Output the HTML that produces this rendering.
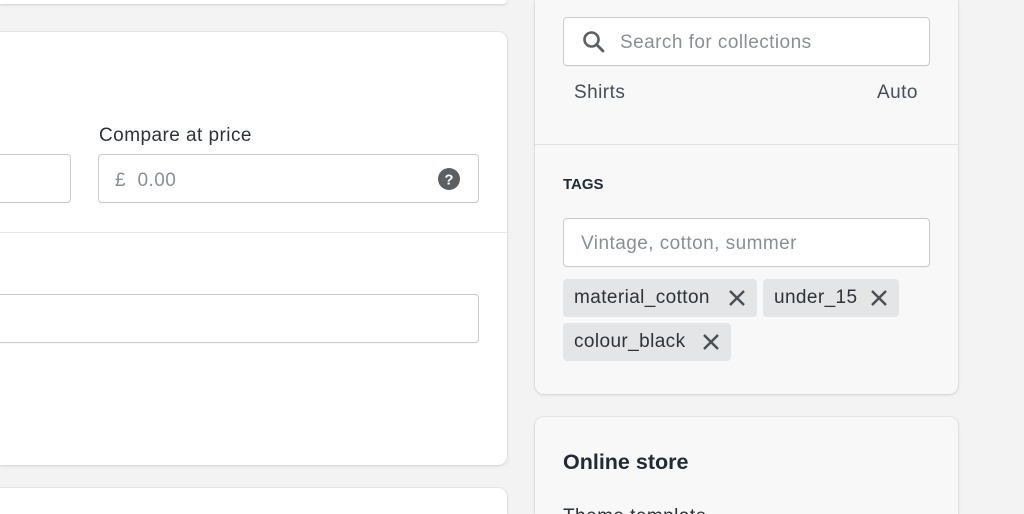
<!DOCTYPE html>
<html style="overflow:hidden;height:514px"><head><style>
body{margin:0;width:1024px;height:514px;background:#f3f3f3;position:relative;overflow:hidden;font-family:"Liberation Sans",sans-serif;color:#212b36}
.card{position:absolute;background:#fff;border-radius:9px;box-shadow:0 0 0 1px rgba(63,63,68,.05),0 1px 3px rgba(63,63,68,.15)}
.rc{background:#f8f8f8}
.inp{position:absolute;background:#fff;border:1px solid #c9cccf;border-radius:4px;box-sizing:border-box;box-shadow:0 1px 0 rgba(0,0,0,.03)}
.ph{position:absolute;font-size:19px;letter-spacing:.45px;color:#8a8f94;white-space:nowrap}
.t{font-size:19px;letter-spacing:.45px;white-space:nowrap}
.tag{position:absolute;background:#e3e5e7;border-radius:4px;height:38px;font-size:19px;letter-spacing:.4px;line-height:38px;padding-left:11px;box-sizing:border-box;color:#2e3338;white-space:nowrap}
.tag svg{position:absolute;top:11px}
</style></head><body>
<div class="card" style="left:0;top:0;width:507px;height:4px;border-radius:0 0 9px 0"></div>
<div class="card" style="left:0;top:32px;width:507px;height:433px;border-radius:0 9px 9px 0">
 <div style="position:absolute;left:0;right:0;top:200px;height:1px;background:#e6e8ea"></div>
</div>
<div class="card" style="left:0;top:488px;width:507px;height:26px;border-radius:0 9px 0 0"></div>
<div class="t" style="position:absolute;left:99px;top:125px;color:#2e3338">Compare at price</div>
<div class="inp" style="left:-20px;top:154px;width:91px;height:49px"></div>
<div class="inp" style="left:98px;top:154px;width:381px;height:49px">
 <span class="ph" style="left:16px;top:15px">£&nbsp;&nbsp;0.00</span>
 <svg style="position:absolute;left:339px;top:13px" width="22" height="22" viewBox="0 0 22 22"><circle cx="11" cy="11" r="11" fill="#5c5f62"/><text x="11" y="16.5" text-anchor="middle" font-family="Liberation Sans" font-weight="bold" font-size="15" fill="#fff">?</text></svg>
</div>
<div class="inp" style="left:-20px;top:294px;width:499px;height:49px"></div>

<div class="card rc" style="left:535px;top:0;width:423px;height:394px;border-radius:0 0 9px 9px">
 <div style="position:absolute;left:0;right:0;top:144px;height:1px;background:#e1e3e5"></div>
</div>
<div class="card rc" style="left:535px;top:417px;width:423px;height:97px;border-radius:9px 9px 0 0;overflow:hidden">
 <div class="t" style="position:absolute;left:28px;top:89px;color:#2e3338">Theme template</div>
</div>
<div class="inp" style="left:563px;top:17px;width:367px;height:49px">
 <svg style="position:absolute;left:18px;top:12px" width="24" height="24" viewBox="0 0 24 24"><circle cx="9.5" cy="9.5" r="7" fill="none" stroke="#5c5f62" stroke-width="2.6"/><path d="M14.5 14.5L21 21" stroke="#5c5f62" stroke-width="2.8" stroke-linecap="round"/></svg>
 <span class="ph" style="left:56px;top:14px">Search for collections</span>
</div>
<div class="t" style="position:absolute;left:574px;top:82px;color:#454f5b">Shirts</div>
<div class="t" style="position:absolute;left:877px;top:82px;color:#454f5b">Auto</div>
<div style="position:absolute;left:563px;top:176px;font-size:15px;font-weight:bold;color:#212b36">TAGS</div>
<div class="inp" style="left:563px;top:218px;width:367px;height:49px"><span class="ph" style="left:17px;top:14px">Vintage, cotton, summer</span></div>
<div class="tag" style="left:563px;top:279px;width:194px">material_cotton<svg style="left:166px" width="16" height="16" viewBox="0 0 16 16"><path d="M1 1L15 15M15 1L1 15" stroke="#4a4f54" stroke-width="2.4"/></svg></div>
<div class="tag" style="left:763px;top:279px;width:136px">under_15<svg style="left:108px" width="16" height="16" viewBox="0 0 16 16"><path d="M1 1L15 15M15 1L1 15" stroke="#4a4f54" stroke-width="2.4"/></svg></div>
<div class="tag" style="left:563px;top:323px;width:168px">colour_black<svg style="left:140px" width="16" height="16" viewBox="0 0 16 16"><path d="M1 1L15 15M15 1L1 15" stroke="#4a4f54" stroke-width="2.4"/></svg></div>
<div style="position:absolute;left:563px;top:450px;font-size:21.5px;font-weight:bold;color:#212b36">Online store</div>
</body></html>
